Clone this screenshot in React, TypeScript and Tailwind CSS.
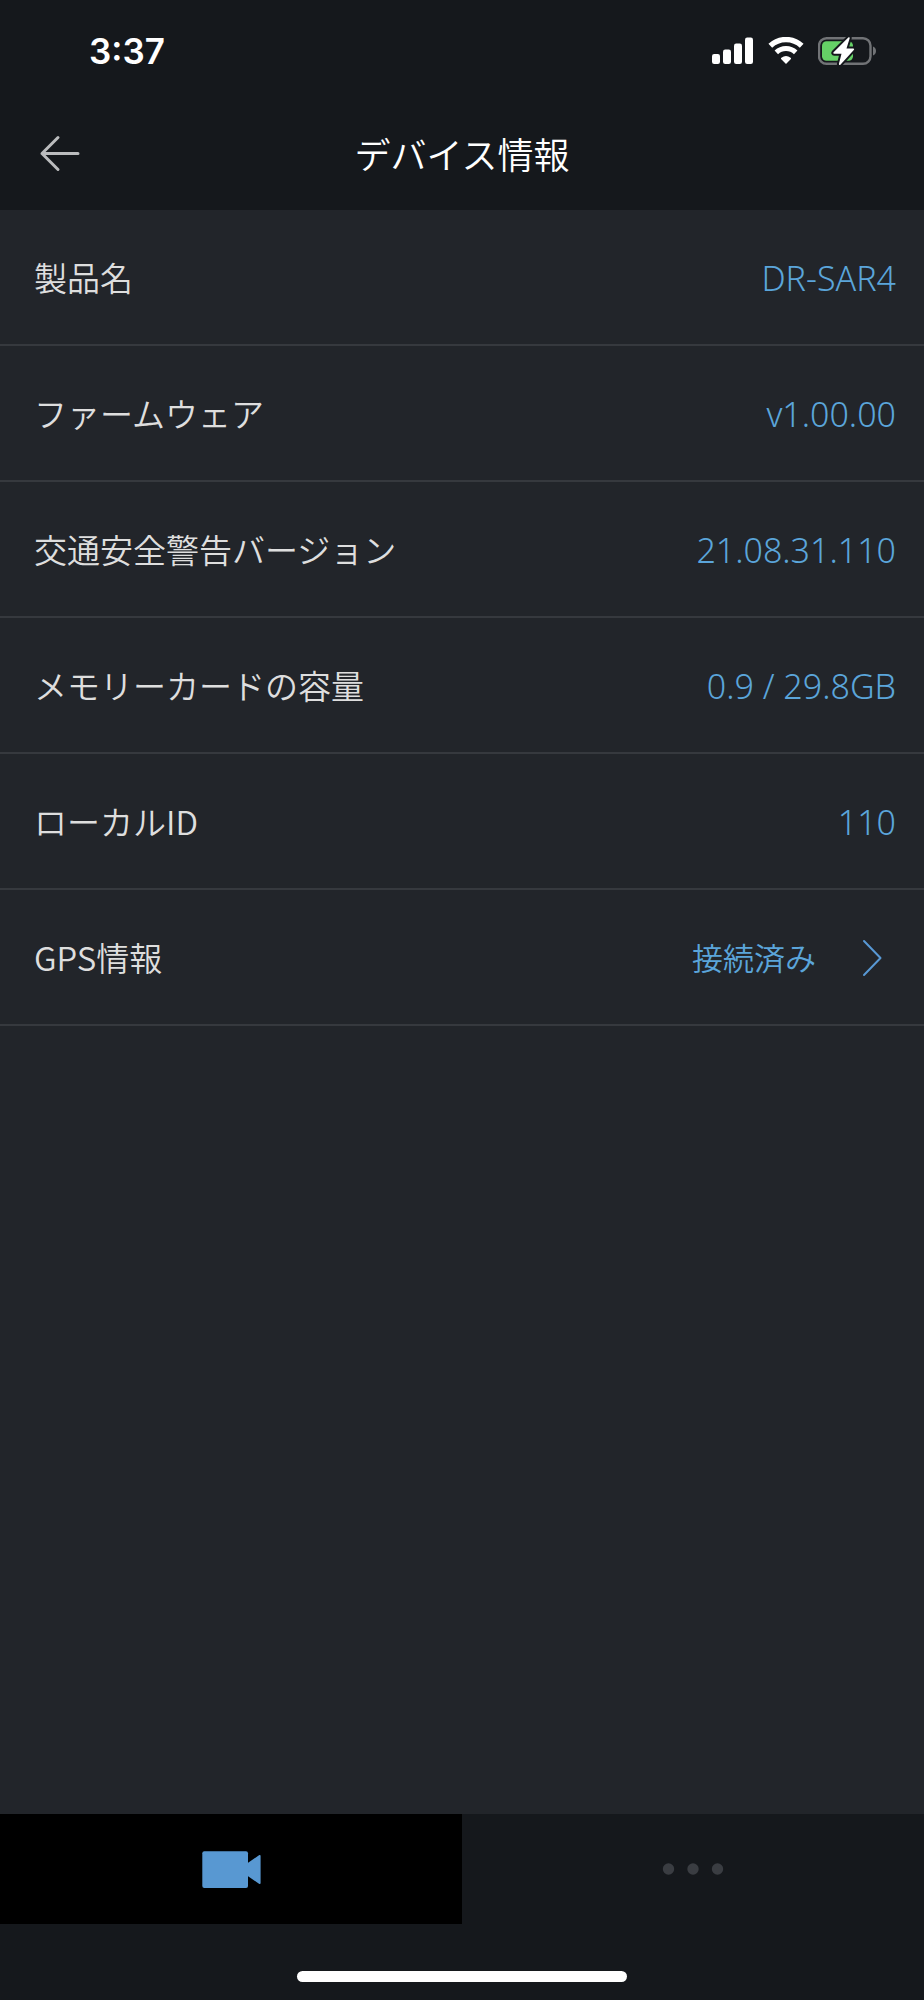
type InfoRow = {
  label: string;
  value: string;
  href?: string;
};

const rows: InfoRow[] = [
  { label: '製品名', value: 'DR-SAR4' },
  { label: 'ファームウェア', value: 'v1.00.00' },
  { label: '交通安全警告バージョン', value: '21.08.31.110' },
  { label: 'メモリーカードの容量', value: '0.9 / 29.8GB' },
  { label: 'ローカルID', value: '110' },
  { label: 'GPS情報', value: '接続済み', href: '#gps' },
];

function SignalIcon() {
  return (
    <svg viewBox="0 0 42 28" className="h-7 w-[42px]" fill="currentColor" aria-hidden="true">
      <rect x="0" y="17" width="8" height="10" rx="2.2" />
      <rect x="11" y="12.5" width="8" height="14.5" rx="2.2" />
      <rect x="22" y="6.5" width="8" height="20.5" rx="2.2" />
      <rect x="33" y="0.5" width="8" height="26.5" rx="2.2" />
    </svg>
  );
}

function WifiIcon() {
  return (
    <svg viewBox="0 0 36 28" className="h-7 w-9" fill="none" stroke="currentColor" aria-hidden="true">
      <path d="M2.3 8.8a22.8 22.8 0 0 1 31.4 0" strokeWidth="5.4" />
      <path d="M8.3 15.4a14 14 0 0 1 19.4 0" strokeWidth="5" />
      <path
        d="M18 27l-4.7-4.8c-.5-.5-.4-1 .1-1.4a7.6 7.6 0 0 1 9.2 0c.5.4.6.9.1 1.4z"
        fill="currentColor"
        stroke="none"
      />
    </svg>
  );
}

function BatteryIcon() {
  return (
    <svg viewBox="0 0 58 28" className="h-7 w-[58px]" aria-hidden="true">
      <rect x="1" y="1.2" width="51.5" height="25.6" rx="7.5" fill="none" stroke="#717376" strokeWidth="2.4" />
      <path d="M55 9.5c4 1.4 4 7.6 0 9z" fill="#717376" />
      <rect x="4" y="4.3" width="31" height="19.4" rx="4.5" fill="#65d166" />
      <path
        d="M30.3.6 15.6 15.2c-.7.8-.3 1.5.6 1.5h7.3L21 26.5c-.4 1.5.7 1.9 1.6.9L35.8 13c.7-.8.3-1.5-.6-1.5h-6.7l3.1-9.9c.4-1.4-.4-1.9-1.3-1z"
        fill="#ffffff"
        stroke="#15181c"
        strokeWidth="4"
        strokeLinejoin="round"
        paintOrder="stroke"
      />
    </svg>
  );
}

function StatusBar() {
  return (
    <div className="flex h-[102px] items-center justify-between pr-12 pl-[89px]">
      <time className="font-['Inter',sans-serif] text-[35px] leading-10 font-semibold">3:37</time>
      <div className="flex items-center gap-[14px]">
        <SignalIcon />
        <WifiIcon />
        <BatteryIcon />
      </div>
    </div>
  );
}

function Row({ label, value, href }: InfoRow) {
  const layout = 'flex h-34 items-center justify-between border-b-2 border-[#36393e] pr-7 pl-[34px]';

  if (href) {
    return (
      <li>
        <a href={href} className={layout}>
          <span>{label}</span>
          <span className="flex items-center gap-8 text-[31px] text-[#5ba5da]">
            {value}
            <svg
              viewBox="0 0 48 48"
              className="size-12"
              fill="none"
              stroke="#5898d4"
              strokeWidth="2"
              strokeLinecap="round"
              strokeLinejoin="round"
              aria-hidden="true"
            >
              <path d="M16 8l16.5 17L16 42" />
            </svg>
          </span>
        </a>
      </li>
    );
  }

  return (
    <li className={layout}>
      <span>{label}</span>
      <span className="pt-[2px] font-['Noto_Sans',sans-serif] text-[34px] font-light text-[#5ba5da]">{value}</span>
    </li>
  );
}

export default function App() {
  return (
    <div className="flex min-h-screen flex-col bg-[#22252a] font-['Open_Sans','Noto_Sans_CJK_JP',sans-serif] font-[350] text-[#dedede]">
      <header className="bg-[#15181c] text-white">
        <StatusBar />
        <div className="grid h-[108px] grid-cols-[1fr_auto_1fr] items-center px-9">
          <button type="button" aria-label="戻る" className="flex size-12 items-center justify-center">
            <svg
              viewBox="0 0 48 48"
              className="size-12"
              fill="none"
              stroke="#bbbcbe"
              strokeWidth="3"
              strokeLinecap="round"
              strokeLinejoin="round"
              aria-hidden="true"
            >
              <path d="M22 5.5 6 21.5l16 16M6 21.5h36" />
            </svg>
          </button>
          <h1 className="text-[36px] leading-12">デバイス情報</h1>
        </div>
      </header>

      <main className="flex-1">
        <ul className="font-['Noto_Sans_CJK_JP',sans-serif] text-[33px] leading-12">
          {rows.map((row) => (
            <Row key={row.label} {...row} />
          ))}
        </ul>
      </main>

      <footer className="bg-[#15181c]">
        <nav className="grid h-[110px] grid-cols-2" aria-label="メインメニュー">
          <button type="button" aria-label="カメラ" aria-current="page" className="flex items-center justify-center bg-black">
            <svg viewBox="0 0 60 38" className="h-[38px] w-[60px]" fill="#5898d2" aria-hidden="true">
              <rect x="1.3" y="1.3" width="45.7" height="36.7" rx="2" />
              <path d="M46 13.5 58 5.3c1-.7 1.6-.4 1.6.7v27c0 1.1-.6 1.4-1.6.7L46 25.5z" />
            </svg>
          </button>
          <button type="button" aria-label="その他" className="flex items-center justify-center">
            <svg viewBox="0 0 62 12" className="h-3 w-[62px]" fill="#3a3d42" aria-hidden="true">
              <circle cx="6.5" cy="6" r="5.7" />
              <circle cx="31" cy="6" r="5.7" />
              <circle cx="55.5" cy="6" r="5.7" />
            </svg>
          </button>
        </nav>
        <div className="flex h-19 items-end justify-center pb-[18px]">
          <div className="h-[11px] w-[330px] rounded-full bg-white" />
        </div>
      </footer>
    </div>
  );
}
